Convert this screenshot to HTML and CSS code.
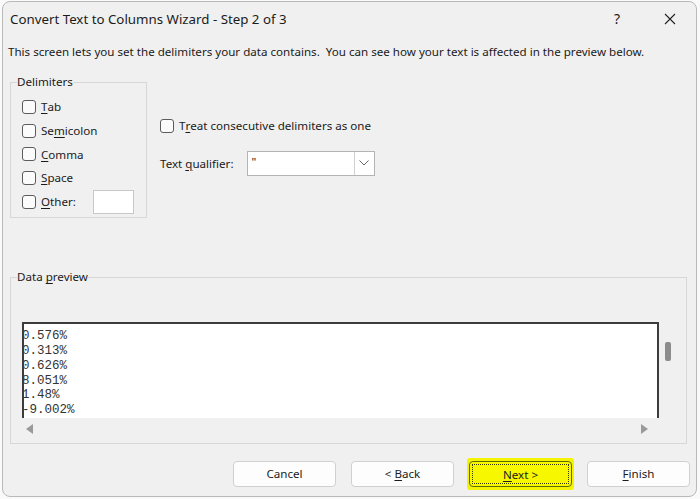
FILE: index.html
```html
<!DOCTYPE html>
<html lang="en">
<head>
  <meta charset="UTF-8">
  <title>Convert Text to Columns Wizard - Step 2 of 3</title>
  <link rel="stylesheet" href="styles.css">
</head>
<body>
  <div class="dialog">
    <div class="titlebar">
      <div class="title">Convert Text to Columns Wizard - Step 2 of 3</div>
      <div class="caption-btn help">?</div>
      <div class="caption-btn">
        <svg width="12" height="12" viewBox="0 0 12 12"><path d="M1 1 L11 11 M11 1 L1 11" stroke="#222" stroke-width="1.1" fill="none"/></svg>
      </div>
    </div>

    <p class="intro">This screen lets you set the delimiters your data contains.&nbsp; You can see how your text is affected in the preview below.</p>

    <div class="options">
      <fieldset class="group delimiters">
        <legend>Delimiters</legend>
        <label class="check"><span class="box"></span><u>T</u>ab</label>
        <label class="check"><span class="box"></span>Se<u>m</u>icolon</label>
        <label class="check"><span class="box"></span><u>C</u>omma</label>
        <label class="check"><span class="box"></span><u>S</u>pace</label>
        <label class="check"><span class="box"></span><u>O</u>ther:<span class="other-input"></span></label>
      </fieldset>

      <div class="side">
        <label class="check"><span class="box"></span>T<u>r</u>eat consecutive delimiters as one</label>
        <div class="qualifier">
          <span>Text <u>q</u>ualifier:</span>
          <div class="select">
            <span class="value">"</span>
            <span class="arrow">
              <svg width="10" height="6" viewBox="0 0 10 6"><path d="M0.5 0.5 L5 5 L9.5 0.5" stroke="#666" stroke-width="1" fill="none"/></svg>
            </span>
          </div>
        </div>
      </div>
    </div>

    <fieldset class="group preview">
      <legend>Data <u>p</u>review</legend>
      <div class="preview-area">
        <div class="preview-row">
          <div class="preview-box">
            <div>0.576%</div>
            <div>0.313%</div>
            <div>0.626%</div>
            <div>8.051%</div>
            <div>1.48%</div>
            <div>-9.002%</div>
          </div>
          <div class="vscroll"><span class="thumb"></span></div>
        </div>
        <div class="hscroll">
          <svg width="8" height="10" viewBox="0 0 8 10"><path d="M7 0 L7 10 L0 5 Z" fill="#9a9a9a"/></svg>
          <svg width="8" height="10" viewBox="0 0 8 10"><path d="M1 0 L1 10 L8 5 Z" fill="#9a9a9a"/></svg>
        </div>
      </div>
    </fieldset>

    <div class="buttons">
      <div class="btn">Cancel</div>
      <div class="btn">&lt; <u>B</u>ack</div>
      <div class="highlight"><div class="btn default"><span class="focus"><u>N</u>ext &gt;</span></div></div>
      <div class="btn"><u>F</u>inish</div>
    </div>
  </div>
</body>
</html>
```

FILE: styles.css
```css
body {
  margin: 0;
  background-color: #fafafa;
  font-family: "Noto Sans", "Open Sans", sans-serif;
  font-size: 11.6px;
  color: #1b1b1b;
}
.dialog {
  box-sizing: border-box;
  width: 695px;
  height: 496px;
  margin: 1px 0 0 2px;
  background-color: #f0f0f0;
  border: 1px solid #b9b9b9;
  border-radius: 8px;
  overflow: hidden;
}
.titlebar {
  display: flex;
  align-items: center;
  height: 33px;
  padding-right: 3px;
}
.title {
  flex: 1;
  padding-left: 7px;
  font-size: 13.3px;
}
.caption-btn {
  width: 46px;
  font-size: 14px;
  display: flex;
  justify-content: center;
}
.caption-btn.help {
  margin-right: 7px;
}
.intro {
  margin: 9px 0 0 5px;
  line-height: 16px;
}
u {
  text-decoration-thickness: 1px;
  text-underline-offset: 2px;
}
.options {
  display: flex;
  align-items: flex-start;
  margin-top: 14px;
}
.group {
  margin: 0 0 0 7px;
  border: 1px solid #d7d7d7;
  padding: 0;
}
.group legend {
  padding: 0;
  margin-left: 6px;
  line-height: 16px;
}
.delimiters {
  width: 124px;
  padding: 5px 0 4px 11px;
}
.delimiters legend {
  margin-left: -5px;
}
.check {
  display: flex;
  align-items: center;
  height: 23.7px;
}
.box {
  box-sizing: border-box;
  width: 14px;
  height: 14px;
  border: 1px solid #5c5c5c;
  border-radius: 3px;
  background-color: #fbfbfb;
  margin-right: 5px;
}
.other-input {
  box-sizing: border-box;
  width: 41px;
  height: 24px;
  margin-left: 17px;
  background-color: #fff;
  border: 1px solid #c8c8c8;
}
.side {
  margin: 40px 0 0 13px;
}
.qualifier {
  display: flex;
  align-items: center;
  margin-top: 13px;
}
.select {
  box-sizing: border-box;
  display: flex;
  width: 128px;
  height: 25px;
  margin-left: 13px;
  background-color: #fff;
  border: 1px solid #b4b4b4;
}
.select .value {
  flex: 1;
  padding-left: 4px;
  line-height: 20px;
}
.select .arrow {
  width: 19px;
  display: flex;
  align-items: center;
  justify-content: center;
  border-left: 1px solid #d0d0d0;
}
.preview {
  width: 677px;
  height: 175px;
  margin-top: 51px;
  box-sizing: border-box;
}
.preview-area {
  margin: 37px 0 0 11px;
}
.preview-row {
  display: flex;
}
.preview-box {
  box-sizing: border-box;
  width: 637px;
  height: 96px;
  padding-top: 5px;
  background-color: #fff;
  border: 2px solid #3c3c3c;
  border-bottom: none;
  overflow: hidden;
  font-family: "Liberation Mono", monospace;
  font-size: 12.5px;
  line-height: 14.7px;
  color: #333;
  text-indent: -2px;
}
.vscroll {
  width: 17px;
  padding-top: 20px;
  display: flex;
  justify-content: center;
}
.thumb {
  width: 6px;
  height: 19px;
  border-radius: 2px;
  background-color: #8c8c8c;
}
.hscroll {
  display: flex;
  justify-content: space-between;
  width: 622px;
  padding: 6px 0 0 4px;
}
.buttons {
  display: flex;
  align-items: center;
  gap: 15px;
  margin: 14px 0 0 230px;
}
.btn {
  box-sizing: border-box;
  width: 103px;
  height: 26px;
  line-height: 24px;
  text-align: center;
  background-color: #fdfdfd;
  border: 1px solid #d0d0d0;
  border-radius: 4px;
}
.highlight {
  margin: 0 -2px;
  padding: 3px 2px;
  background-color: #f4f400;
  border-radius: 3px;
}
.btn.default {
  background-color: #f7f700;
  border: 1px solid #5d6b00;
  padding: 2px;
}
.focus {
  display: block;
  height: 20px;
  line-height: 19px;
  box-sizing: border-box;
  border: 1px dotted #3b3b00;
}
```
